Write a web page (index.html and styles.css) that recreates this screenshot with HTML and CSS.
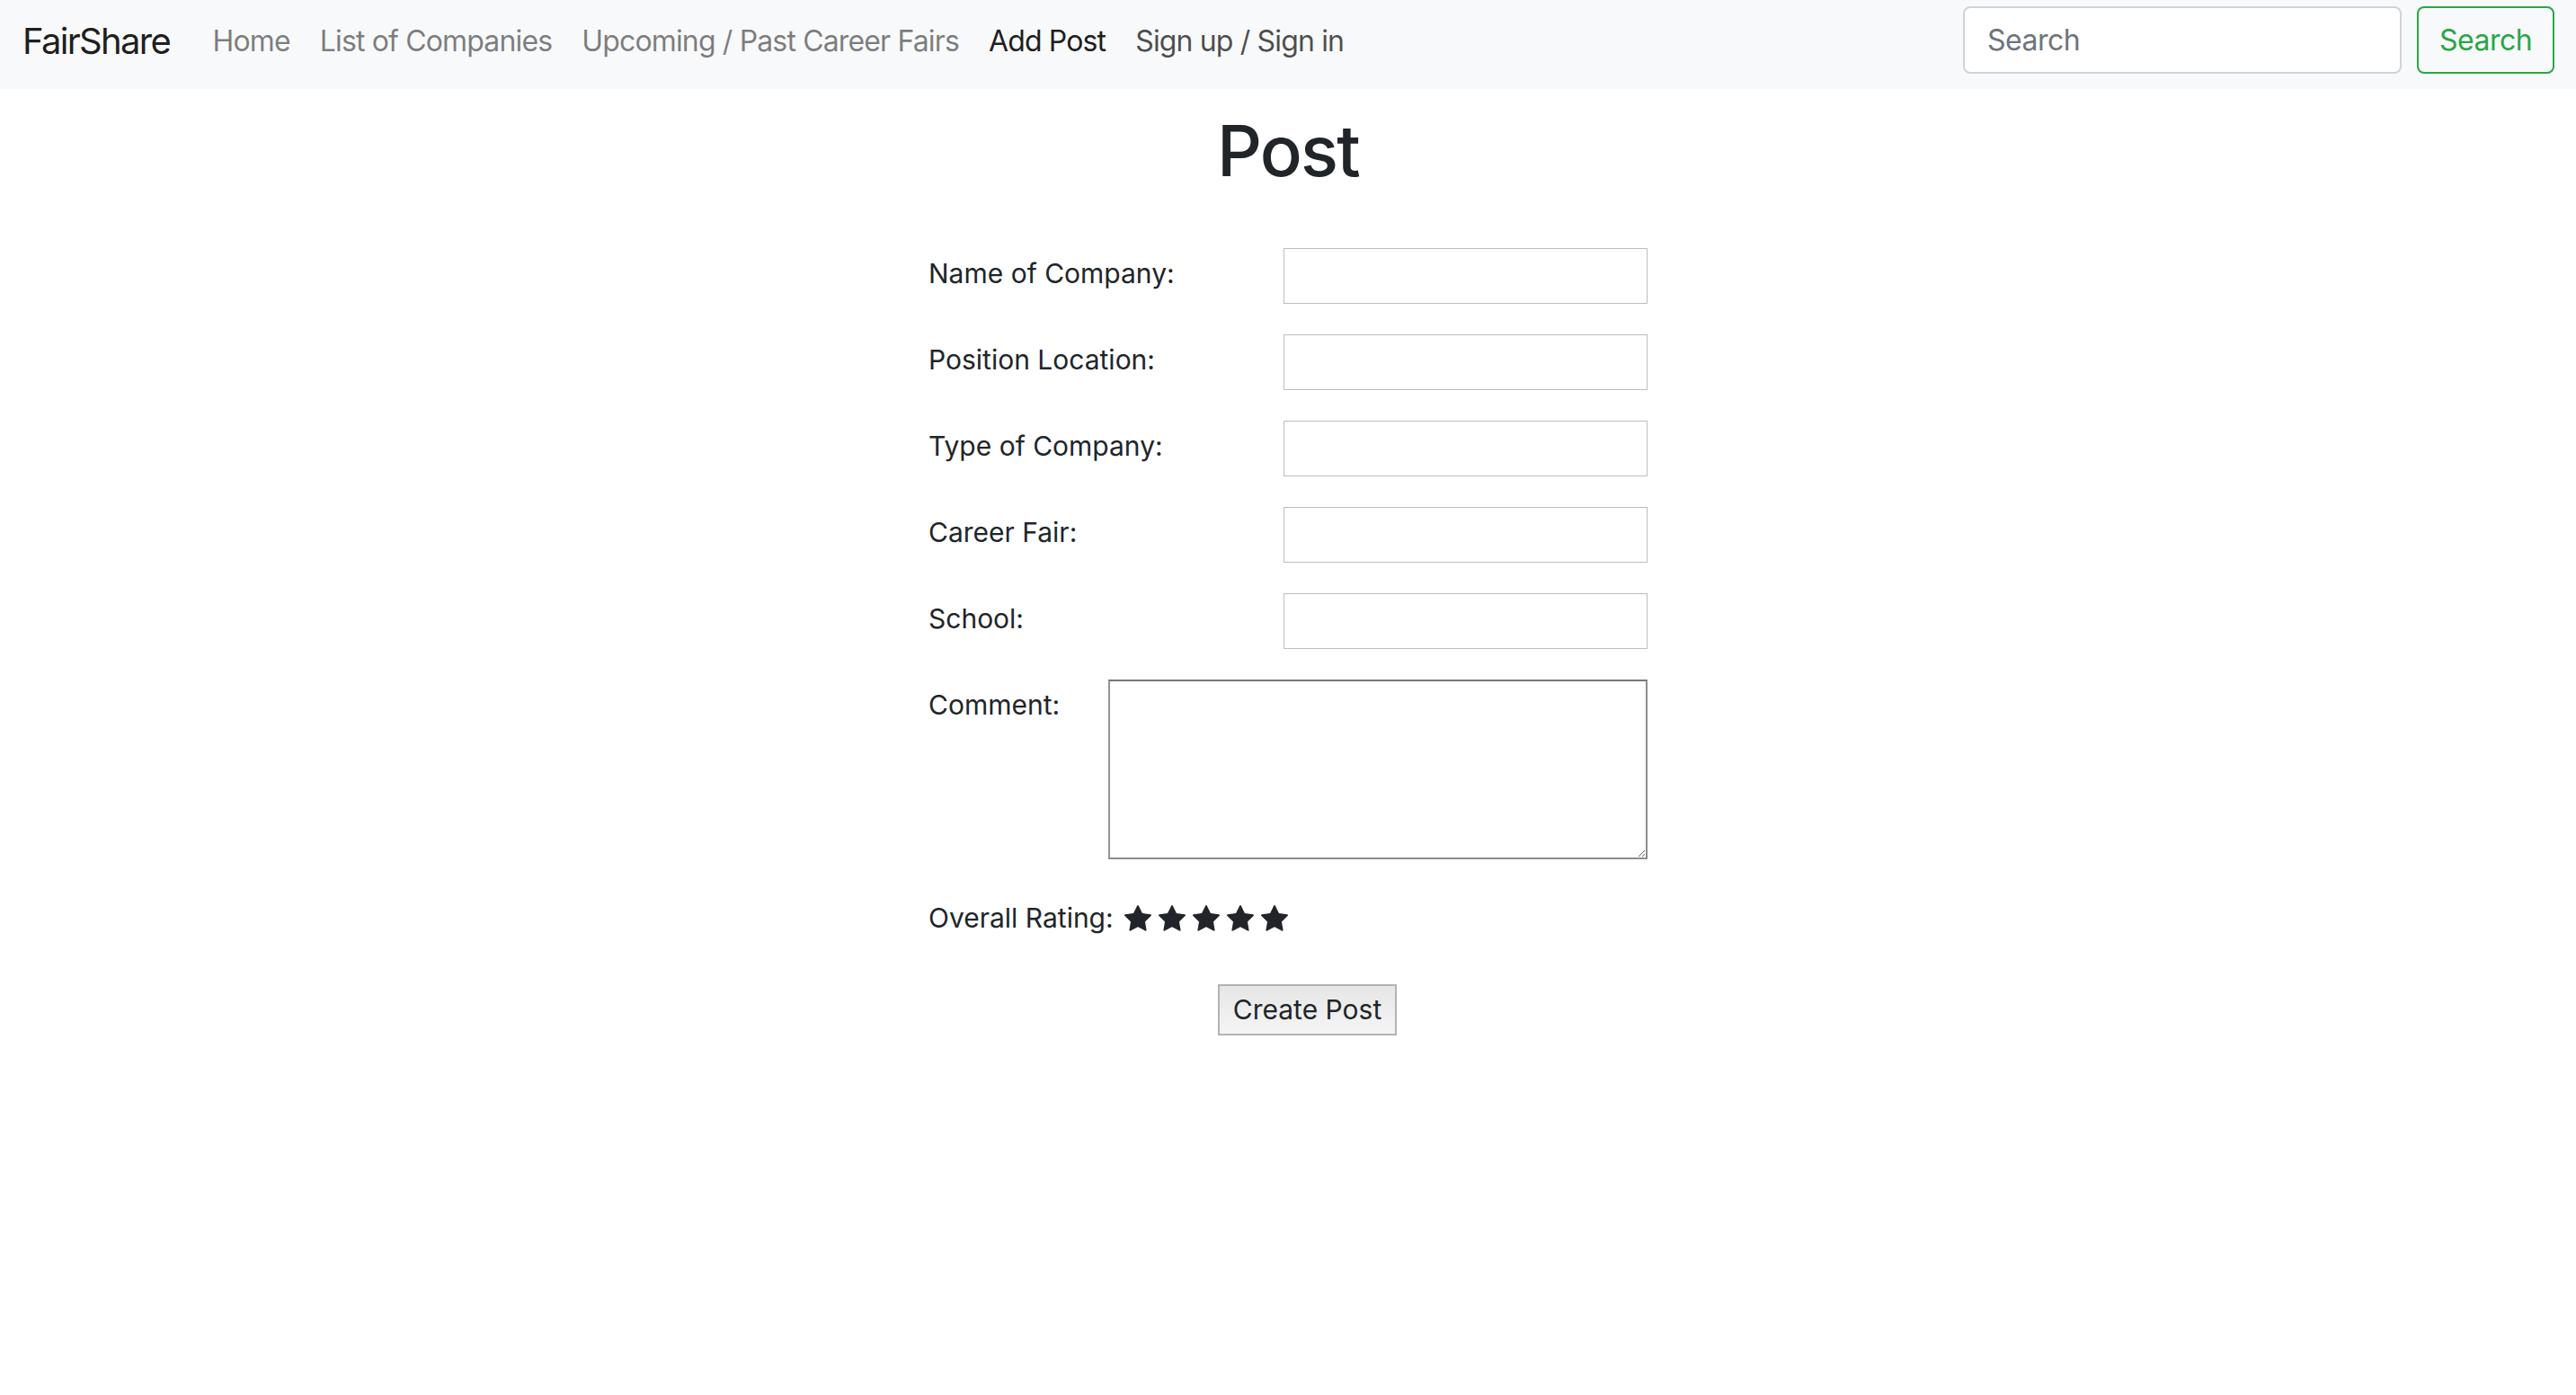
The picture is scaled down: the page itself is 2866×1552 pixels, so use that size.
FILE: index.html
```html
<!DOCTYPE html>
<html lang="en">
<head>
<meta charset="utf-8">
<title>FairShare - Add Post</title>
<link rel="stylesheet" href="styles.css">
</head>
<body>
<nav class="navbar">
  <a class="brand" href="#">FairShare</a>
  <ul class="nav">
    <li><a class="nav-link" href="#">Home</a></li>
    <li><a class="nav-link" href="#">List of Companies</a></li>
    <li><a class="nav-link" href="#">Upcoming / Past Career Fairs</a></li>
    <li><a class="nav-link active" href="#">Add Post</a></li>
    <li><a class="nav-link account" href="#">Sign up / Sign in</a></li>
  </ul>
  <form class="search">
    <input class="search-input" type="search" placeholder="Search">
    <button class="search-btn" type="button">Search</button>
  </form>
</nav>
<main class="page">
  <h1 class="title">Post</h1>
  <form class="post-form">
    <div class="row"><label class="label">Name of Company:</label><input class="field" type="text"></div>
    <div class="row"><label class="label">Position Location:</label><input class="field" type="text"></div>
    <div class="row"><label class="label">Type of Company:</label><input class="field" type="text"></div>
    <div class="row"><label class="label">Career Fair:</label><input class="field" type="text"></div>
    <div class="row"><label class="label">School:</label><input class="field" type="text"></div>
    <div class="row comment-row"><label class="label">Comment:</label><textarea class="comment"></textarea></div>
    <div class="rating">
      <span class="rating-label">Overall Rating:</span>
      <span class="stars">
        <svg class="star" viewBox="0 0 1664 1600"><path d="M1664 615q0 22-26 48l-363 354 86 500q1 7 1 20 0 21-10.5 35.5T1321 1587q-19 0-40-12l-449-236-449 236q-22 12-40 12-21 0-31.5-14.5T301 1537q0-6 2-20l86-500L25 663Q0 636 0 615q0-37 56-46l502-73L783 41q19-41 49-41t49 41l225 455 502 73q56 9 56 46z"/></svg>
        <svg class="star" viewBox="0 0 1664 1600"><path d="M1664 615q0 22-26 48l-363 354 86 500q1 7 1 20 0 21-10.5 35.5T1321 1587q-19 0-40-12l-449-236-449 236q-22 12-40 12-21 0-31.5-14.5T301 1537q0-6 2-20l86-500L25 663Q0 636 0 615q0-37 56-46l502-73L783 41q19-41 49-41t49 41l225 455 502 73q56 9 56 46z"/></svg>
        <svg class="star" viewBox="0 0 1664 1600"><path d="M1664 615q0 22-26 48l-363 354 86 500q1 7 1 20 0 21-10.5 35.5T1321 1587q-19 0-40-12l-449-236-449 236q-22 12-40 12-21 0-31.5-14.5T301 1537q0-6 2-20l86-500L25 663Q0 636 0 615q0-37 56-46l502-73L783 41q19-41 49-41t49 41l225 455 502 73q56 9 56 46z"/></svg>
        <svg class="star" viewBox="0 0 1664 1600"><path d="M1664 615q0 22-26 48l-363 354 86 500q1 7 1 20 0 21-10.5 35.5T1321 1587q-19 0-40-12l-449-236-449 236q-22 12-40 12-21 0-31.5-14.5T301 1537q0-6 2-20l86-500L25 663Q0 636 0 615q0-37 56-46l502-73L783 41q19-41 49-41t49 41l225 455 502 73q56 9 56 46z"/></svg>
        <svg class="star" viewBox="0 0 1664 1600"><path d="M1664 615q0 22-26 48l-363 354 86 500q1 7 1 20 0 21-10.5 35.5T1321 1587q-19 0-40-12l-449-236-449 236q-22 12-40 12-21 0-31.5-14.5T301 1537q0-6 2-20l86-500L25 663Q0 636 0 615q0-37 56-46l502-73L783 41q19-41 49-41t49 41l225 455 502 73q56 9 56 46z"/></svg>
      </span>
    </div>
    <div class="submit-row"><button class="create-btn" type="button">Create Post</button></div>
  </form>
</main>
</body>
</html>
```

FILE: styles.css
```css
html, body {
  margin: 0;
  padding: 0;
  background: #ffffff;
}

body {
  font-family: Inter, "Noto Sans", "Liberation Sans", sans-serif;
  color: #212529;
}

.navbar {
  display: flex;
  align-items: center;
  box-sizing: border-box;
  height: 99px;
  padding: 0 24px 9px 25px;
  background: #f8f9fa;
}

.brand {
  font-size: 40px;
  line-height: 1;
  letter-spacing: -1.7px;
  color: rgba(0, 0, 0, 0.9);
  text-decoration: none;
  margin-right: 31px;
  padding-top: 2px;
}

.nav {
  display: flex;
  list-style: none;
  margin: 0;
  padding: 0;
}

.nav-link {
  display: block;
  font-size: 32px;
  line-height: 1.5;
  letter-spacing: -0.85px;
  padding: 2px 16.5px 0;
  color: rgba(0, 0, 0, 0.5);
  text-decoration: none;
}

.nav-link.active {
  color: rgba(0, 0, 0, 0.9);
}

.nav-link.account {
  color: rgba(0, 0, 0, 0.7);
}

.search {
  display: flex;
  gap: 17px;
  margin: 0 0 2px auto;
}

.search-input {
  box-sizing: border-box;
  width: 488px;
  height: 75px;
  padding: 0 25px;
  border: 2px solid #ced4da;
  border-radius: 8px;
  background: #ffffff;
  font-family: inherit;
  font-size: 32px;
  letter-spacing: -0.5px;
  color: #495057;
  outline: none;
}

.search-input::placeholder {
  color: #6c757d;
}

.search-btn {
  box-sizing: border-box;
  width: 153px;
  height: 75px;
  padding: 0;
  border: 2px solid #28a745;
  border-radius: 8px;
  background: transparent;
  font-family: inherit;
  font-size: 32px;
  letter-spacing: -0.5px;
  color: #28a745;
}

.page {
  padding: 22px 0 0;
}

.title {
  margin: 0;
  text-align: center;
  font-size: 78px;
  font-weight: 500;
  line-height: 1.2;
  letter-spacing: -1.75px;
  color: #212529;
}

.post-form {
  width: 800px;
  margin: 61px auto 0;
}

.row {
  display: flex;
  justify-content: space-between;
  align-items: flex-start;
  margin-bottom: 34px;
}

.label {
  font-size: 30px;
  line-height: 1.5;
  padding-top: 6px;
  color: #212529;
}

.field {
  box-sizing: border-box;
  width: 405px;
  height: 62px;
  margin: 0;
  border: 1px solid #bdbdbd;
  background: #ffffff;
  font-size: 30px;
}

.comment-row {
  margin-top: 2px;
  margin-bottom: 43px;
}

.comment {
  box-sizing: border-box;
  width: 600px;
  height: 200px;
  margin: 0;
  border: 2px solid;
  border-color: #767676 #8c8c8c #8c8c8c #959595;
  background: #ffffff;
  font-size: 30px;
}

.rating {
  display: flex;
  align-items: center;
  gap: 12px;
  font-size: 30px;
  line-height: 1.5;
}

.stars {
  display: flex;
  gap: 8px;
}

.star {
  width: 30px;
  height: 29px;
  fill: #212529;
}

.submit-row {
  display: flex;
  padding-top: 51px;
}

.create-btn {
  box-sizing: border-box;
  width: 199px;
  height: 57px;
  margin-left: 322px;
  padding: 0;
  border: 2px solid #b3b3b3;
  border-radius: 0;
  background: linear-gradient(#e6e6e6, #f5f5f5);
  font-family: inherit;
  font-size: 30px;
  color: #212529;
}
```
